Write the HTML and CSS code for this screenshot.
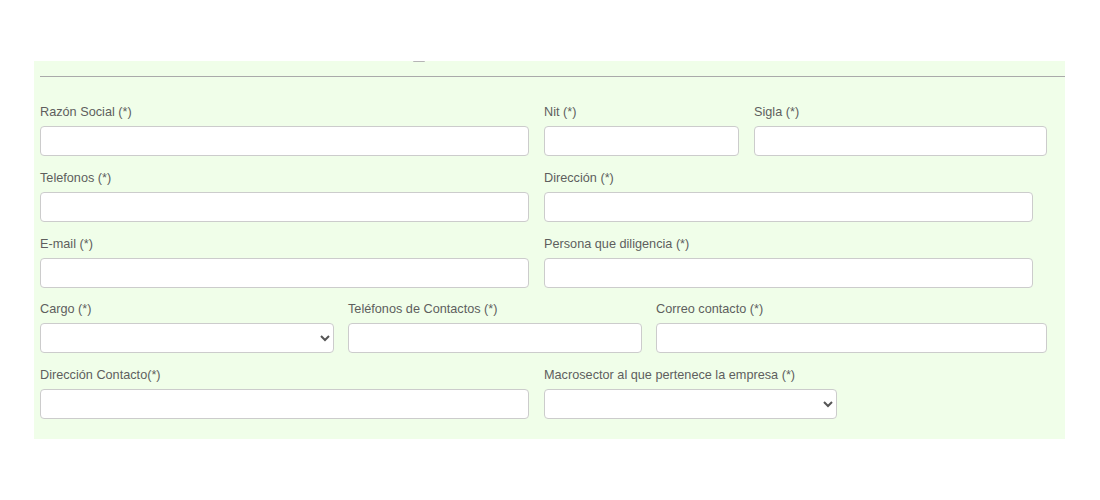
FILE: index.html
```html
<!DOCTYPE html>
<html lang="es">
<head>
<meta charset="utf-8">
<title>Formulario</title>
<link rel="stylesheet" href="styles.css">
</head>
<body>
<div class="panel">
  <span class="knob"></span>
  <hr class="rule">
  <div class="row">
    <div class="field w489"><label>Razón Social (*)</label><input type="text"></div>
    <div class="field w195"><label>Nit (*)</label><input type="text"></div>
    <div class="field w293"><label>Sigla (*)</label><input type="text"></div>
  </div>
  <div class="row">
    <div class="field w489"><label>Telefonos (*)</label><input type="text"></div>
    <div class="field w489"><label>Dirección (*)</label><input type="text"></div>
  </div>
  <div class="row">
    <div class="field w489"><label>E-mail (*)</label><input type="text"></div>
    <div class="field w489"><label>Persona que diligencia (*)</label><input type="text"></div>
  </div>
  <div class="row tight">
    <div class="field w294"><label>Cargo (*)</label><select><option></option></select></div>
    <div class="field w294"><label>Teléfonos de Contactos (*)</label><input type="text"></div>
    <div class="field w391"><label>Correo contacto (*)</label><input type="text"></div>
  </div>
  <div class="row">
    <div class="field w489"><label>Dirección Contacto(*)</label><input type="text"></div>
    <div class="field w293"><label>Macrosector al que pertenece la empresa (*)</label><select><option></option></select></div>
  </div>
</div>
</body>
</html>
```
FILE: styles.css
```css
html, body {
  margin: 0;
  padding: 0;
  background: #ffffff;
}
body {
  padding: 61px 0 0 34px;
  font-family: "Liberation Sans", Arial, sans-serif;
  font-size: 12.7px;
  color: #5e5e5e;
}
.panel {
  position: relative;
  width: 1031px;
  box-sizing: border-box;
  background: #f0fee9;
  padding: 15px 0 20px 6px;
}
.knob {
  position: absolute;
  left: 379px;
  top: 0;
  width: 12px;
  height: 1px;
  background: #b5b5b5;
  border-radius: 0 0 6px 6px;
}
.rule {
  margin: 0 0 25px 0;
  border: 0;
  height: 1px;
  background: #aaaaaa;
  width: 1025px;
}
.row {
  display: flex;
  gap: 15px;
  margin-bottom: 11.75px;
}
.row.tight { gap: 14px; }
.row:last-child { margin-bottom: 0; }
.field {
  display: flex;
  flex-direction: column;
}
.w489 { width: 489px; }
.w195 { width: 195px; }
.w293 { width: 293px; }
.w294 { width: 294px; }
.w391 { width: 391px; }
label {
  display: block;
  height: 21px;
  line-height: 21px;
  margin-bottom: 3px;
  white-space: nowrap;
}
input, select {
  box-sizing: border-box;
  width: 100%;
  height: 30px;
  border: 1px solid #cccccc;
  border-radius: 4px;
  background-color: #ffffff;
  font-family: inherit;
  font-size: 13px;
  color: #555555;
  margin: 0;
  padding: 4px 8px;
}
select {
  padding: 4px 4px;
}
```
